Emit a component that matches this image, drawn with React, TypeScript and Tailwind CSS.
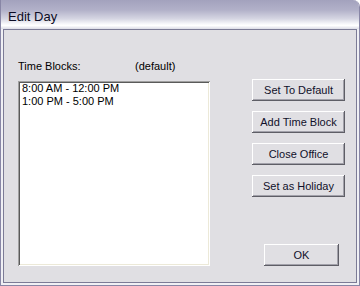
import React from "react";

const font = { fontFamily: '"Liberation Sans", Arial, sans-serif' };

const buttons = ["Set To Default", "Add Time Block", "Close Office", "Set as Holiday"];
const blocks = ["8:00 AM - 12:00 PM", "1:00 PM - 5:00 PM"];

const Btn = ({ label, w }: { label: string; w: string }) => (
  <button
    className={`${w} h-[22px] bg-[#e0dfe3] text-[11px] leading-none text-[#10102a] shadow-[inset_-1px_-1px_#5e5e66,inset_1px_1px_#ffffff,inset_-2px_-2px_#a2a1aa]`}
    style={font}
  >
    {label}
  </button>
);

export default function App() {
  return (
    <div className="w-[360px] h-[286px] bg-white" style={font}>
      <div className="w-full h-full flex flex-col rounded-tr-[7px] overflow-hidden border-x border-b border-[#8886a6] bg-[#f0f0f4]">
        {/* title bar */}
        <div className="h-[29px] shrink-0 flex items-center pl-[7px] pt-[4px] bg-[linear-gradient(to_bottom,#a3a2bd_0%,#b2b1c9_35%,#d6d6e3_65%,#f7f7fa_82%,#ffffff_88%,#dcdce6_100%)]">
          <span className="text-[13px] text-[#0c0c24]">Edit Day</span>
        </div>
        {/* client area */}
        <div className="flex-1 flex px-[2px] pb-[2px]">
          <div className="flex-1 flex border border-[#7c7b96] bg-[#e0dfe3] pl-[14px] pt-[30px] pb-[16px]">
            <div className="w-[192px] flex flex-col">
              <div className="h-[13px] flex text-[11px] leading-[13px] text-black">
                <span className="w-[117px]">Time Blocks:</span>
                <span>(default)</span>
              </div>
              <div className="mt-[8px] flex-1 bg-white pl-[2px] shadow-[inset_1px_1px_#a0a0a0,inset_-1px_-1px_#ffffff,inset_2px_2px_#5a5a5a,inset_-2px_-2px_#ece9d8]">
                <div className="pt-[1px] pl-[2px] text-[11px] leading-[13px] text-black">
                  {blocks.map((b) => (
                    <div key={b}>{b}</div>
                  ))}
                </div>
              </div>
            </div>
            <div className="ml-[42px] flex flex-col pt-[19px]">
              <div className="flex flex-col gap-[10px]">
                {buttons.map((b) => (
                  <Btn key={b} label={b} w="w-[93px]" />
                ))}
              </div>
              <div className="mt-auto ml-[12px]">
                <Btn label="OK" w="w-[75px]" />
              </div>
            </div>
          </div>
        </div>
      </div>
    </div>
  );
}
